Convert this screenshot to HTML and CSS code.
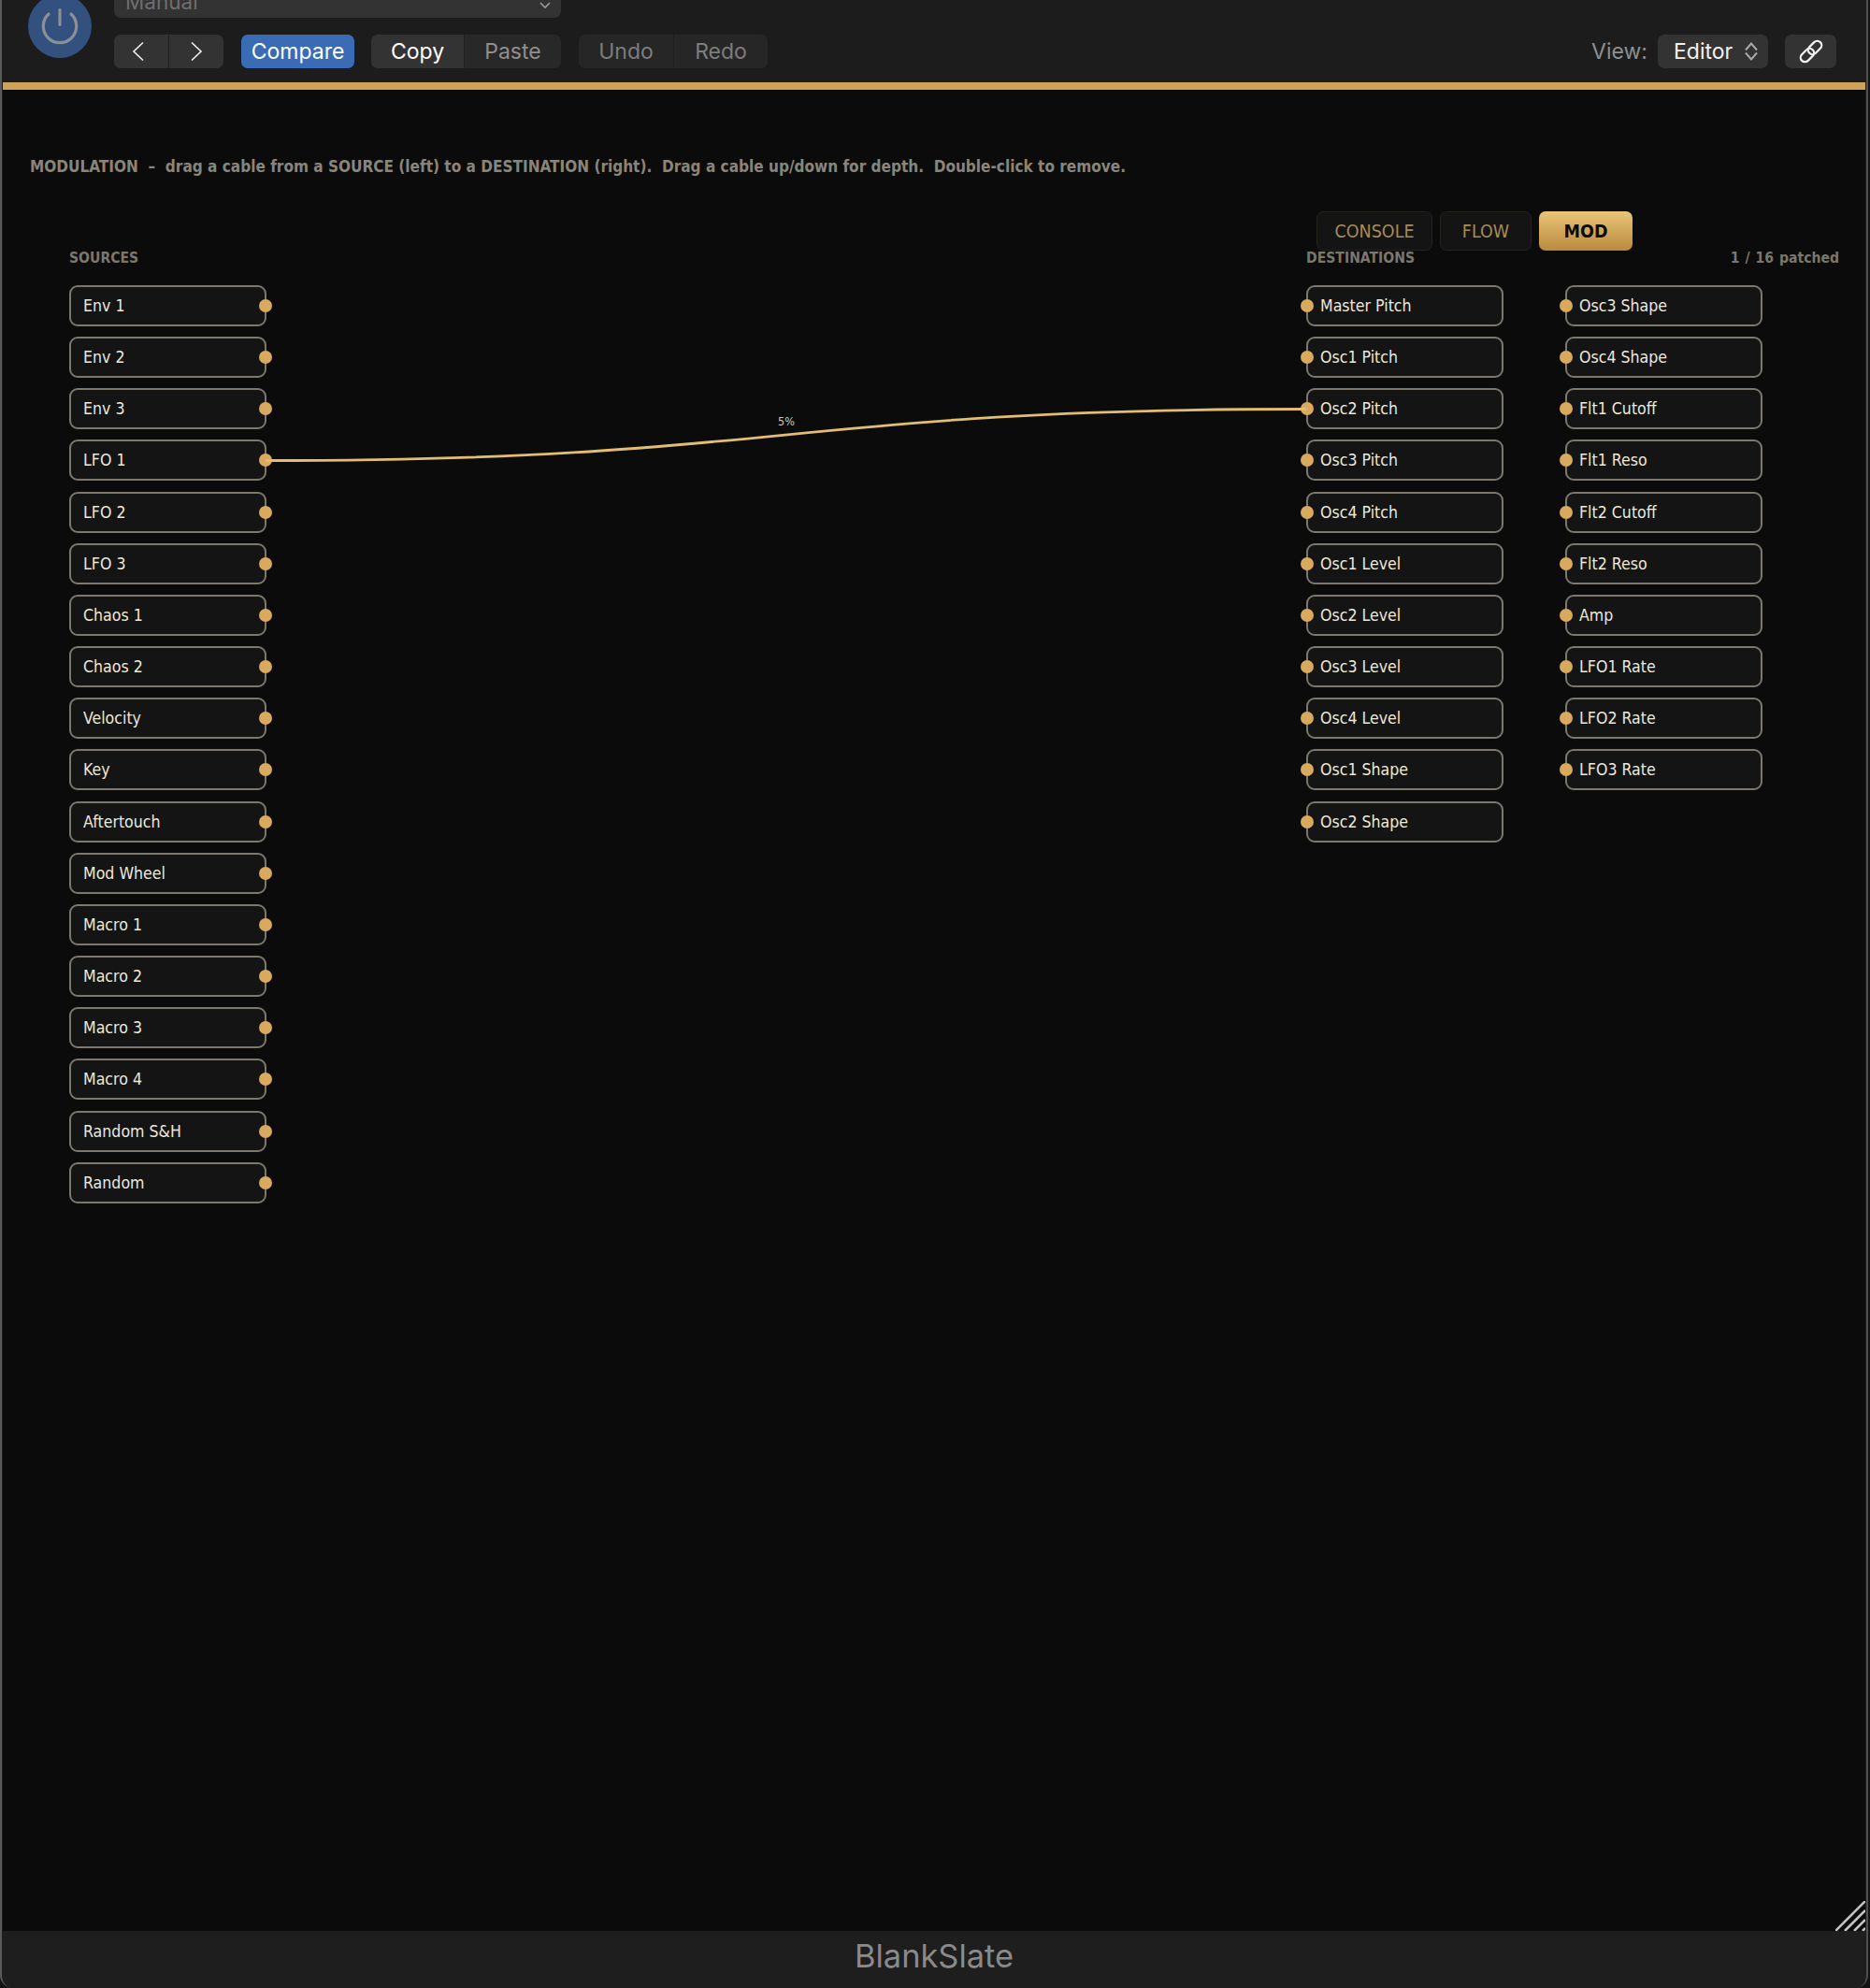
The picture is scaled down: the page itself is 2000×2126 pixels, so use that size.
FILE: index.html
```html
<!DOCTYPE html>
<html lang="en">
<head>
    <meta charset="UTF-8">
    <title>BlankSlate</title>
    <link rel="stylesheet" href="styles.css">
</head>
<body>

<div class="window">
    <header class="topbar">
        <div class="power">
            <svg width="44" height="44" viewBox="0 0 44 44" fill="none" stroke="#8b8f96" stroke-width="3.2" stroke-linecap="round">
                <path d="M22 4.5V20.5"/>
                <path d="M10 9A17.7 17.7 0 1 0 34 9"/>
            </svg>
        </div>
        <div class="controls">
            <div class="preset-select">
                <span>Manual</span>
                <svg width="14" height="10" viewBox="0 0 14 10" fill="none" stroke="#9a9a9a" stroke-width="1.6"><path d="M2 2L7 7L12 2"/></svg>
            </div>
            <div class="toolbar">
                <div class="btn-group nav-group">
                    <button class="nav-prev">
                        <svg width="14" height="22" viewBox="0 0 14 22" fill="none" stroke="#f0f0f0" stroke-width="1.6"><path d="M12 1.5L2 11L12 20.5"/></svg>
                    </button>
                    <button>
                        <svg width="14" height="22" viewBox="0 0 14 22" fill="none" stroke="#f0f0f0" stroke-width="1.6"><path d="M2 1.5L12 11L2 20.5"/></svg>
                    </button>
                </div>
                <button class="compare-btn">Compare</button>
                <div class="btn-group copy-group">
                    <button class="btn-lit">Copy</button>
                    <button>Paste</button>
                </div>
                <div class="btn-group undo-group">
                    <button>Undo</button>
                    <button>Redo</button>
                </div>
                <div class="view-area">
                    <span class="view-label">View:</span>
                    <div class="view-select">
                        <span>Editor</span>
                        <svg width="16" height="24" viewBox="0 0 16 24" fill="none" stroke="#a8a8a8" stroke-width="2"><path d="M2 10.5L8 3.5L14 10.5"/><path d="M2 13.5L8 20.5L14 13.5"/></svg>
                    </div>
                    <button class="link-btn">
                        <svg width="28" height="28" viewBox="0 0 24 24" fill="none" stroke="#f2f2f2" stroke-width="1.9">
                            <rect x="1.5" y="11.5" width="14" height="8" rx="4" transform="rotate(-45 8.5 15.5)"/>
                            <rect x="8.5" y="4.5" width="14" height="8" rx="4" transform="rotate(-45 15.5 8.5)"/>
                        </svg>
                    </button>
                </div>
            </div>
        </div>
    </header>

    <main class="stage">
        <p class="hint">MODULATION &nbsp;&ndash;&nbsp; drag a cable from a SOURCE (left) to a DESTINATION (right).&nbsp; Drag a cable up/down for depth.&nbsp; Double-click to remove.</p>

        <nav class="tabs">
            <button class="tab tab-console">CONSOLE</button>
            <button class="tab tab-flow">FLOW</button>
            <button class="tab tab-active">MOD</button>
        </nav>

        <div class="patchbay">
            <section class="sources">
                <h2 class="col-title">SOURCES</h2>
                <div class="port-list" id="sourceList"></div>
            </section>
            <section class="destinations">
                <div class="dest-head">
                    <h2 class="col-title">DESTINATIONS</h2>
                    <span class="patched">1 / 16 patched</span>
                </div>
                <div class="dest-cols">
                    <div class="port-list" id="destList1"></div>
                    <div class="port-list" id="destList2"></div>
                </div>
            </section>
        </div>

        <!-- cable sits over the port lists -->
        <svg class="cables" width="1996" height="1969" viewBox="0 0 1996 1969" fill="none">
            <path d="M281 396.5C837 396.5 837 341.5 1394 341.5" stroke="#e3bd72" stroke-width="2.8"/>
        </svg>
        <span class="depth-label">5%</span>

        <svg class="resize-grip" width="32" height="32" viewBox="0 0 32 32" stroke="#c4c4c4" stroke-width="2.6">
            <path d="M0 32L32 0"/>
            <path d="M10 32L32 10"/>
            <path d="M20 32L32 20"/>
            <path d="M29 32L32 29"/>
        </svg>
    </main>

    <footer class="footer">BlankSlate</footer>
</div>

<script src="app.js"></script>
</body>
</html>
```

FILE: styles.css
```css
html, body {
    margin: 0;
    height: 2126px;
    overflow: hidden;
    background-color: #141414;
}

.window {
    width: 1998px;
    height: 2126px;
    box-sizing: border-box;
    padding: 0 1px;
    background-color: #1c1c1c;
    border-right: 2px solid #505050;
    border-left: 2px solid #5a5a5a;
    border-bottom-left-radius: 14px;
    border-bottom-right-radius: 14px;
    display: flex;
    flex-direction: column;
    overflow: hidden;
}

.topbar {
    height: 88px;
    background-color: #1c1c1c;
    display: flex;
    flex-shrink: 0;
    padding-left: 27px;
    box-sizing: border-box;
}

.power {
    width: 68px;
    height: 68px;
    margin-top: -6px;
    border-radius: 50%;
    background-color: #33517f;
    display: flex;
    align-items: center;
    justify-content: center;
}

.controls {
    flex: 1;
    margin-left: 24px;
    font-family: Inter, "Liberation Sans", sans-serif;
}

.preset-select {
    width: 478px;
    height: 30px;
    margin-top: -11px;
    padding: 0 10px 0 12px;
    box-sizing: border-box;
    background-color: #333333;
    border-radius: 7px;
    display: flex;
    align-items: flex-end;
    justify-content: space-between;
    color: #6e6e6e;
    font-size: 22.5px;
    line-height: 34px;
}

.preset-select svg {
    margin-bottom: 8px;
}

.toolbar {
    display: flex;
    align-items: center;
    margin-top: 18px;
    height: 36px;
}

button {
    font-family: Inter, "Liberation Sans", sans-serif;
    font-size: 23px;
    border: none;
    padding: 0;
    height: 36px;
    background: none;
    color: #8f8f8f;
    display: flex;
    align-items: center;
    justify-content: center;
}

.btn-group {
    display: flex;
    border-radius: 7px;
    overflow: hidden;
    background-color: #282828;
}

.btn-group button + button {
    border-left: 1px solid #1f1f1f;
}

.nav-group {
    width: 117px;
    margin-right: 19px;
    background-color: #333333;
}

.nav-group button {
    flex: 1;
}

.nav-prev svg {
    margin-right: 6px;
}

.compare-btn {
    width: 121px;
    margin-right: 18px;
    border-radius: 7px;
    background-color: #3a6cb5;
    color: #ffffff;
}

.copy-group {
    width: 203px;
    margin-right: 19px;
}

.copy-group button {
    width: 104px;
}

.copy-group .btn-lit {
    width: 99px;
    background-color: #333333;
    color: #ffffff;
}

.undo-group {
    width: 202px;
    background-color: #262626;
}

.undo-group button {
    width: 101px;
    color: #7d7d7d;
}

.view-area {
    margin-left: auto;
    margin-right: 31px;
    display: flex;
    align-items: center;
}

.view-label {
    color: #8f8f8f;
    font-size: 23px;
    margin-right: 11px;
}

.view-select {
    width: 118px;
    height: 36px;
    box-sizing: border-box;
    padding: 0 10px 0 17px;
    background-color: #333333;
    border-radius: 7px;
    display: flex;
    align-items: center;
    justify-content: space-between;
    color: #f2f2f2;
    font-size: 23px;
}

.link-btn {
    width: 55px;
    margin-left: 18px;
    border-radius: 7px;
    background-color: #333333;
}

.stage {
    position: relative;
    flex: 1;
    border-top: 8px solid #d0a258;
    background-color: #0b0b0b;
    font-family: "DejaVu Sans Condensed", "DejaVu Sans", sans-serif;
}

.hint {
    margin: 0;
    padding: 72px 0 0 29px;
    height: 20px;
    line-height: 20px;
    font-size: 17.06px;
    font-weight: bold;
    white-space: nowrap;
    color: #8a857a;
}

.tabs {
    display: flex;
    gap: 8px;
    margin: 38px 0 0 1405px;
    height: 42px;
}

.tab {
    height: 42px;
    box-sizing: border-box;
    border: 1px solid #26231d;
    border-radius: 7px;
    background-color: #141414;
    color: #a78b58;
    font-family: "DejaVu Sans Condensed", "DejaVu Sans", sans-serif;
    font-size: 19.5px;
}

.tab-console {
    width: 124px;
}

.tab-flow {
    width: 98px;
}

.tab-active {
    width: 100px;
    border: none;
    background: linear-gradient(#eac577, #b98a3f);
    color: #0c0c0c;
    font-weight: bold;
}

.patchbay {
    display: flex;
    padding-left: 71px;
    margin-top: -2px;
}

.sources {
    width: 1323px;
}

.destinations {
    width: 570px;
}

.col-title {
    margin: 0;
    height: 20px;
    line-height: 20px;
    font-size: 15.6px;
    font-weight: bold;
    color: #7b776d;
}

.dest-head {
    display: flex;
    justify-content: space-between;
}

.patched {
    height: 20px;
    line-height: 20px;
    font-size: 15.6px;
    font-weight: bold;
    word-spacing: 1px;
    color: #7b776d;
}

.port-list {
    display: flex;
    flex-direction: column;
    gap: 11.16px;
    margin-top: 19px;
}

.dest-cols {
    display: flex;
    gap: 66px;
}

.port {
    position: relative;
    width: 211px;
    height: 44px;
    box-sizing: border-box;
    border: 2px solid #7c786e;
    border-radius: 9px;
    background-color: #141414;
    color: #ede8da;
    font-size: 17.6px;
    line-height: 40px;
    padding-left: 13px;
    white-space: nowrap;
}

.port::after {
    content: "";
    position: absolute;
    top: 13px;
    width: 14px;
    height: 14px;
    border-radius: 50%;
    background-color: #d9a95e;
}

.port-out::after {
    right: -8px;
}

.port-in::after {
    left: -8px;
}

.cables {
    position: absolute;
    left: 0;
    top: 0;
    pointer-events: none;
}

.depth-label {
    position: absolute;
    left: 829px;
    top: 347px;
    font-size: 12.5px;
    color: #cfcbc0;
}

.resize-grip {
    position: absolute;
    right: 0;
    bottom: 0;
}

.footer {
    height: 61px;
    flex-shrink: 0;
    background-color: #1e1e1e;
    color: #8a8a8a;
    font-family: Inter, "Liberation Sans", sans-serif;
    font-size: 34.4px;
    line-height: 54px;
    text-align: center;
}
```

FILE: app.js
```js
const sources = ['Env 1', 'Env 2', 'Env 3', 'LFO 1', 'LFO 2', 'LFO 3', 'Chaos 1', 'Chaos 2', 'Velocity', 'Key',
    'Aftertouch', 'Mod Wheel', 'Macro 1', 'Macro 2', 'Macro 3', 'Macro 4', 'Random S&H', 'Random'];
const destLeft = ['Master Pitch', 'Osc1 Pitch', 'Osc2 Pitch', 'Osc3 Pitch', 'Osc4 Pitch', 'Osc1 Level', 'Osc2 Level',
    'Osc3 Level', 'Osc4 Level', 'Osc1 Shape', 'Osc2 Shape'];
const destRight = ['Osc3 Shape', 'Osc4 Shape', 'Flt1 Cutoff', 'Flt1 Reso', 'Flt2 Cutoff', 'Flt2 Reso', 'Amp',
    'LFO1 Rate', 'LFO2 Rate', 'LFO3 Rate'];

function fillList(id, names, kind) {
    const list = document.getElementById(id);
    names.forEach(name => {
        const port = document.createElement('div');
        port.className = 'port ' + kind;
        port.textContent = name;
        list.appendChild(port);
    });
}

fillList('sourceList', sources, 'port-out');
fillList('destList1', destLeft, 'port-in');
fillList('destList2', destRight, 'port-in');
```
